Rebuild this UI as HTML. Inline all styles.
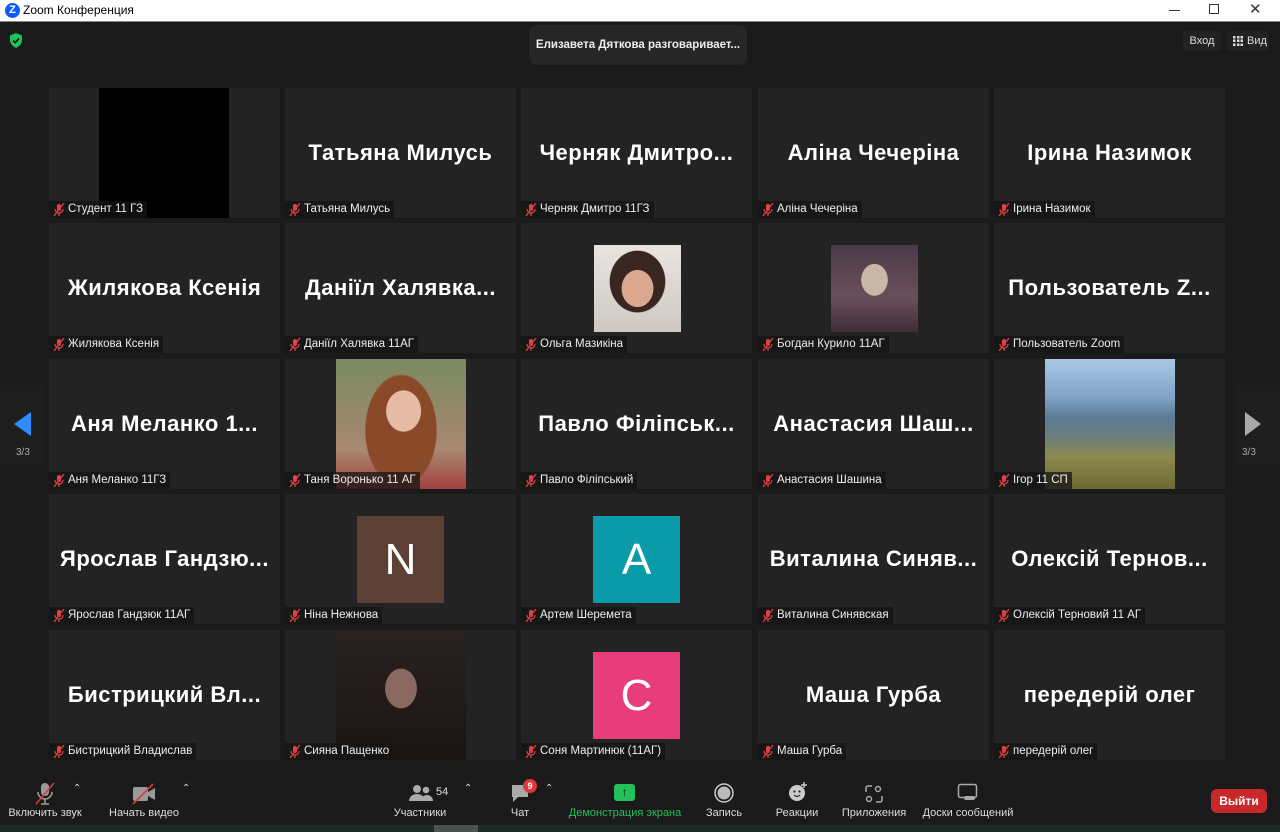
<!DOCTYPE html>
<html><head><meta charset="utf-8">
<style>
*{margin:0;padding:0;box-sizing:border-box}
body{width:1280px;height:832px;background:#1a1a1a;position:relative;overflow:hidden;font-family:"Liberation Sans","DejaVu Sans",sans-serif;color:#fff}
.title{position:absolute;left:0;top:0;width:1280px;height:22px;background:#fff;border-bottom:1px solid #888;color:#000;font-size:12px}
.t{position:absolute;width:231px;height:130px;background:#232323;overflow:hidden}
.big{position:absolute;left:0;right:0;top:52px;text-align:center;font-weight:bold;font-size:22px;letter-spacing:0.5px;white-space:nowrap}
.lb{position:absolute;left:0;bottom:0;height:17px;background:rgba(20,20,20,0.75);font-size:11.5px;line-height:17px;padding:0 4px 0 19px;color:#eee;white-space:nowrap}
.lb svg{position:absolute;left:4px;top:2px}
.sq{position:absolute;top:22px;left:72px;width:87px;height:87px;font-size:44px;text-align:center;line-height:87px;color:#fff}
.tb{position:absolute;font-size:11px;color:#ddd;text-align:center}
</style></head><body>
<div class="title">
<div style="position:absolute;left:5px;top:3px;width:15px;height:15px;border-radius:50%;background:#0b5cff;color:#fff;font-weight:bold;font-size:11px;text-align:center;line-height:15px">Z</div>
<div style="position:absolute;left:23px;top:3px">Zoom Конференция</div>
<div style="position:absolute;left:1169px;top:10px;width:11px;height:1px;background:#333"></div>
<div style="position:absolute;left:1209px;top:4px;width:10px;height:10px;border:1px solid #333"></div>
<div style="position:absolute;left:1249px;top:0px;font-size:15px;color:#333">✕</div>
</div>
<svg style="position:absolute;left:9px;top:33px" width="14" height="15" viewBox="0 0 14 15"><path d="M7 0L13 2.5V7C13 11 10 13.5 7 15C4 13.5 1 11 1 7V2.5Z" fill="#23c15a"/><path d="M4 7.5L6.2 9.6L10 5.6" stroke="#111" stroke-width="1.6" fill="none"/></svg>
<div style="position:absolute;left:529px;top:25px;width:218px;height:40px;background:#262626;border-radius:8px;font-size:11.5px;font-weight:bold;line-height:40px;text-align:center;color:#eee">Елизавета Дяткова разговаривает...</div>
<div style="position:absolute;left:1183px;top:31px;width:38px;height:20px;background:#222;border-radius:4px;font-size:11px;line-height:20px;text-align:center;color:#ddd">Вход</div>
<div style="position:absolute;left:1227px;top:31px;width:42px;height:20px;background:#222;border-radius:4px;font-size:11px;line-height:20px;color:#ddd;padding-left:20px">Вид<span style="position:absolute;left:6px;top:5px;width:10px;height:10px;background:repeating-linear-gradient(90deg,#ddd 0 2.5px,transparent 2.5px 3.8px);-webkit-mask:repeating-linear-gradient(0deg,#000 0 2.5px,transparent 2.5px 3.8px);mask:repeating-linear-gradient(0deg,#000 0 2.5px,transparent 2.5px 3.8px)"></span></div>

<div style="position:absolute;left:0;top:385px;width:44px;height:80px;background:#1e1e1e"></div>
<svg style="position:absolute;left:14px;top:412px" width="18" height="24"><path d="M17 0V24L0 12Z" fill="#2d8cff"/></svg>
<div style="position:absolute;left:16px;top:447px;font-size:10px;color:#aaa">3/3</div>
<div style="position:absolute;left:1236px;top:385px;width:44px;height:80px;background:#1e1e1e"></div>
<svg style="position:absolute;left:1245px;top:412px" width="18" height="24"><path d="M0 0V24L16 12Z" fill="#aaa"/></svg>
<div style="position:absolute;left:1242px;top:447px;font-size:10px;color:#aaa">3/3</div>

<div id="g"></div>

<!-- toolbar -->
<svg style="position:absolute;left:34px;top:782px" width="22" height="24"><rect x="7" y="1" width="8" height="13" rx="4" fill="#999"/><path d="M4 10a7 7 0 0 0 14 0M11 17v5M7 22h8" stroke="#999" stroke-width="1.6" fill="none"/><path d="M2 22L20 1" stroke="#e0383e" stroke-width="1.6"/></svg>
<div class="tb" style="left:2px;top:807px;width:86px">Включить звук</div>
<div class="tb" style="left:73px;top:783px;font-size:10px">⌃</div>
<svg style="position:absolute;left:131px;top:783px" width="26" height="22"><rect x="2" y="4" width="15" height="14" rx="2" fill="#999"/><path d="M17 9L24 5V17L17 13Z" fill="#999"/><path d="M2 21L22 1" stroke="#e0383e" stroke-width="1.6"/></svg>
<div class="tb" style="left:104px;top:807px;width:80px">Начать видео</div>
<div class="tb" style="left:182px;top:783px;font-size:10px">⌃</div>

<svg style="position:absolute;left:409px;top:784px" width="24" height="18"><circle cx="8" cy="5" r="4" fill="#aaa"/><path d="M0 17a8 7 0 0 1 16 0Z" fill="#aaa"/><circle cx="17" cy="6" r="3.3" fill="#aaa"/><path d="M12 17a6 6 0 0 1 12 0Z" fill="#aaa"/></svg>
<div class="tb" style="left:436px;top:786px">54</div>
<div class="tb" style="left:464px;top:783px;font-size:10px">⌃</div>
<div class="tb" style="left:390px;top:807px;width:60px">Участники</div>
<svg style="position:absolute;left:510px;top:784px" width="22" height="20"><path d="M2 1H18V13H8L3 18V13H2Z" fill="#aaa"/></svg>
<div style="position:absolute;left:523px;top:779px;width:14px;height:14px;border-radius:50%;background:#e0383e;font-size:9px;font-weight:bold;text-align:center;line-height:14px">9</div>
<div class="tb" style="left:545px;top:783px;font-size:10px">⌃</div>
<div class="tb" style="left:505px;top:807px;width:30px">Чат</div>
<div style="position:absolute;left:614px;top:784px;width:21px;height:17px;background:#23c15a;border-radius:3px;color:#111;font-size:12px;text-align:center;line-height:17px;font-weight:bold">↑</div>
<div class="tb" style="left:565px;top:807px;width:120px;color:#23c15a">Демонстрация экрана</div>
<svg style="position:absolute;left:714px;top:783px" width="20" height="20"><circle cx="10" cy="10" r="9" stroke="#ccc" stroke-width="1.5" fill="none"/><circle cx="10" cy="10" r="6.5" fill="#bbb"/></svg>
<div class="tb" style="left:700px;top:807px;width:48px">Запись</div>
<svg style="position:absolute;left:787px;top:781px" width="22" height="22"><circle cx="10" cy="12" r="8" fill="#ccc"/><circle cx="7.5" cy="10.5" r="1.1" fill="#222"/><circle cx="12.5" cy="10.5" r="1.1" fill="#222"/><path d="M7 14q3 3 6 0" stroke="#222" stroke-width="1.2" fill="none"/><path d="M17 1v6M14 4h6" stroke="#ccc" stroke-width="1.4"/></svg>
<div class="tb" style="left:770px;top:807px;width:54px">Реакции</div>
<svg style="position:absolute;left:864px;top:784px" width="20" height="20"><path d="M2 8V4a2 2 0 0 1 2-2h4M18 12v4a2 2 0 0 1-2 2h-4" stroke="#aaa" stroke-width="1.5" fill="none"/><circle cx="14" cy="5" r="2.5" stroke="#aaa" stroke-width="1.4" fill="none"/><circle cx="5" cy="15" r="2.5" stroke="#aaa" stroke-width="1.4" fill="none"/></svg>
<div class="tb" style="left:838px;top:807px;width:72px">Приложения</div>
<svg style="position:absolute;left:957px;top:783px" width="22" height="20"><rect x="1.5" y="1.5" width="18" height="13" rx="2" stroke="#aaa" stroke-width="1.5" fill="none"/><rect x="7" y="13" width="11" height="4" rx="2" fill="#aaa"/></svg>
<div class="tb" style="left:918px;top:807px;width:100px">Доски сообщений</div>
<div style="position:absolute;left:1211px;top:789px;width:56px;height:24px;background:#c8282c;border-radius:6px;font-size:12px;font-weight:bold;text-align:center;line-height:24px">Выйти</div>
<div style="position:absolute;left:0;top:825px;width:1280px;height:7px;background:#1e2a28"></div>
<div style="position:absolute;left:434px;top:825px;width:44px;height:7px;background:#4a5250"></div>

<script>
var cols=[49,285,521,758,994],rows=[88,223,359,494,630];
var mic='<svg width="12" height="13"><rect x="4" y="1" width="4" height="7" rx="2" fill="#d44"/><path d="M2 6a4 4 0 0 0 8 0M6 10v3" stroke="#d44" stroke-width="1.2" fill="none"/><path d="M1 13L11 0" stroke="#e0383e" stroke-width="1.4"/></svg>';
var d=[
["","Студент 11 ГЗ","black"],["Татьяна Милусь","Татьяна Милусь"],["Черняк  Дмитро...","Черняк Дмитро 11ГЗ"],["Аліна Чечеріна","Аліна Чечеріна"],["Ірина Назимок","Ірина Назимок"],
["Жилякова Ксенія","Жилякова Ксенія"],["Даніїл Халявка...","Даніїл Халявка 11АГ"],["","Ольга Мазикіна","p1"],["","Богдан Курило 11АГ","p2"],["Пользователь  Z...","Пользователь Zoom"],
["Аня  Меланко  1...","Аня Меланко 11ГЗ"],["","Таня Воронько 11 АГ","p3"],["Павло  Філіпськ...","Павло Філіпський"],["Анастасия  Шаш...","Анастасия Шашина"],["","Ігор 11 СП","p4"],
["Ярослав  Гандзю...","Ярослав Гандзюк 11АГ"],["","Ніна Нежнова","N"],["","Артем Шеремета","A"],["Виталина  Синяв...","Виталина Синявская"],["Олексій  Терного...".replace("Терного","Терно")+"","Олексій Терновий 11 АГ"],
["Бистрицкий  Вл...","Бистрицкий Владислав"],["","Сияна Пащенко","p5"],["","Соня Мартинюк (11АГ)","C"],["Маша Гурба","Маша Гурба"],["передерій олег","передерій олег"]];
d[19][0]="Олексій  Терное...".replace("Терное","Терн")+"";d[19][0]="Олексій  Терн"+"ов...";
var h='';
d.forEach(function(x,i){
 var c=i%5,r=Math.floor(i/5);
 h+='<div class="t" style="left:'+cols[c]+'px;top:'+rows[r]+'px">';
 var k=x[2];
 if(k=="black")h+='<div style="position:absolute;left:50px;top:0;width:130px;height:130px;background:#000"></div>';
 else if(k=="p1")h+='<div style="position:absolute;left:73px;top:22px;width:87px;height:87px;background:radial-gradient(ellipse 30% 35% at 50% 50%,#d9a88e 60%,transparent 62%),radial-gradient(ellipse 45% 50% at 50% 42%,#3a2620 70%,transparent 72%),linear-gradient(#e8e4e0,#cfc8c2)"></div>';
 else if(k=="p2")h+='<div style="position:absolute;left:73px;top:22px;width:87px;height:87px;background:radial-gradient(ellipse 25% 30% at 50% 40%,#c9b8a8 60%,transparent 62%),linear-gradient(#4a3a46,#6a4f5a 60%,#3e2e36)"></div>';
 else if(k=="p3")h+='<div style="position:absolute;left:51px;top:0;width:130px;height:130px;background:radial-gradient(ellipse 22% 26% at 52% 40%,#e7bca6 60%,transparent 62%),radial-gradient(ellipse 45% 70% at 50% 55%,#8a4a2a 60%,transparent 62%),linear-gradient(#7a8a60,#a98870 70%,#a34040)"></div>';
 else if(k=="p4")h+='<div style="position:absolute;left:51px;top:0;width:130px;height:130px;background:linear-gradient(#a9c8e6 0,#7fa3c4 30%,#5c7a96 45%,#6a7e7a 60%,#8c8a50 75%,#6b6a30 100%)"></div>';
 else if(k=="p5")h+='<div style="position:absolute;left:51px;top:0;width:130px;height:130px;background:radial-gradient(ellipse 20% 25% at 50% 45%,#8a6a60 60%,transparent 62%),linear-gradient(#2a2220,#1a1412)"></div>';
 else if(k=="N")h+='<div class="sq" style="background:#5c4036">N</div>';
 else if(k=="A")h+='<div class="sq" style="background:#0b9ba8">A</div>';
 else if(k=="C")h+='<div class="sq" style="background:#e83d7a">C</div>';
 if(x[0])h+='<div class="big">'+x[0]+'</div>';
 h+='<div class="lb">'+mic+x[1]+'</div></div>';
});
document.getElementById('g').innerHTML=h;
</script>
</body></html>
